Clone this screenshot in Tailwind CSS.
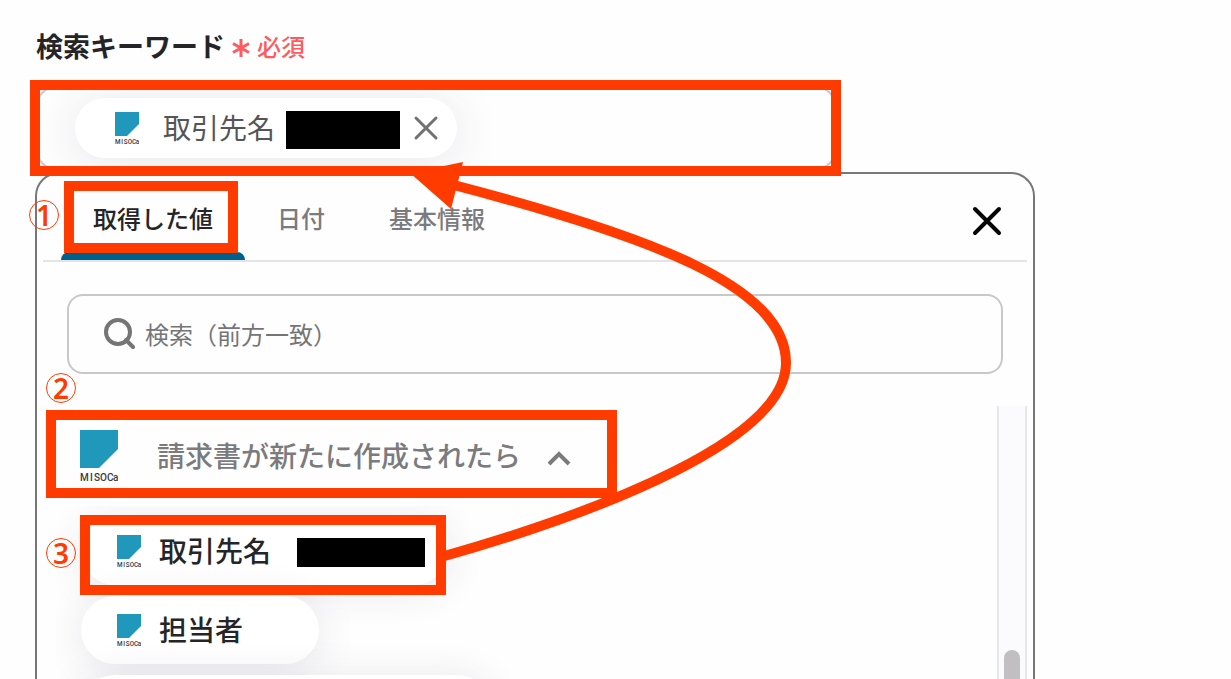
<!DOCTYPE html>
<html lang="ja">
<head>
<meta charset="utf-8">
<title>検索キーワード</title>
<script src="https://cdn.jsdelivr.net/npm/@tailwindcss/browser@4"></script>
</head>
<body class="relative flex h-screen flex-col overflow-hidden bg-[#fefefe] pl-9 font-['Noto_Sans_CJK_JP',sans-serif] text-[#252528]">
<svg class="hidden">
  <symbol id="misoca" viewBox="0 0 38 52">
    <path d="M0 0H38V19L19 38H0Z" fill="#1f98bb"/>
    <g font-family="Roboto, sans-serif" font-size="10" font-weight="500" fill="#3a3a3d">
      <text y="51" x="0 10 14 20 27 33">MISOCa</text>
    </g>
  </symbol>
</svg>

<label for="keyword" class="mt-[26px] flex h-10 shrink-0 items-center text-[27px] leading-10 font-bold">検索キーワード<span class="ml-1 flex items-center gap-1 text-2xl font-medium text-[#ff5a5f]"><svg class="mx-[3px] mt-1 size-[18px]" viewBox="0 0 18 18" stroke="#ff5a5f" stroke-width="3" aria-hidden="true"><path d="M9 0V18M1 4.500L17 13.500M17 4.500L1 13.500"/></svg><span>必須</span></span></label>

<div class="relative z-10 mt-5 mr-[395px] h-[84px] shrink-0">
  <div class="flex h-full items-center overflow-hidden rounded-[20px] border-2 border-[#c8c8cb] pl-[37px]">
    <div class="flex h-[60px] items-center rounded-full bg-white pr-[18px] pl-10 text-[28px] text-[#555558] shadow-[0_4px_48px_rgba(60,50,90,0.12)]">
      <svg class="h-[33px] w-6" aria-hidden="true"><use href="#misoca"/></svg>
      <span class="ml-6 pb-[2px] leading-10">取引先名</span>
      <span class="mt-1 ml-[11px] h-[38px] w-[114px] bg-black"></span>
      <button type="button" aria-label="削除" class="ml-[13px]">
        <svg class="size-[26px]" viewBox="0 0 26 26" fill="none" stroke="#717174" stroke-width="3" stroke-linecap="round"><path d="M3 3L23 23M23 3L3 23"/></svg>
      </button>
    </div>
    <input id="keyword" type="text" class="h-full min-w-0 flex-1 bg-transparent px-4 text-2xl outline-none">
  </div>
  <div class="pointer-events-none absolute -top-[6px] -right-[5px] -bottom-[6px] -left-[6px] border-10 border-[#ff3b00]"></div>
</div>

<section class="mt-[2px] mr-[196px] -ml-px flex min-h-0 flex-1 flex-col rounded-t-3xl border-2 border-b-0 border-[#77777a] px-[6px]">
  <div class="flex h-[88px] shrink-0 items-center justify-between border-b-2 border-[#e4e4e6] pr-6 pl-[18px]">
    <div role="tablist" class="flex h-full text-2xl font-medium text-[#7b7b7e]">
      <div class="relative">
        <button type="button" role="tab" aria-selected="true" class="h-full px-8 pt-[2px] text-[#252528]">取得した値</button>
        <div class="absolute inset-x-0 bottom-0 h-2 rounded-t-lg bg-[#00608a]"></div>
        <div class="pointer-events-none absolute top-[7px] right-[7px] bottom-[7px] left-[3px] border-10 border-[#ff3b00]"></div>
        <span class="absolute top-[26px] -left-8 flex size-[30px] items-center justify-center rounded-full border border-[#ff3b00] font-['Noto_Sans',sans-serif] text-[28px] leading-none font-semibold text-[#ff3b00]">1</span>
      </div>
      <button type="button" role="tab" class="px-8 pt-[2px]">日付</button>
      <button type="button" role="tab" class="px-8 pt-[2px]">基本情報</button>
    </div>
    <button type="button" aria-label="閉じる" class="pt-2">
      <svg class="size-8" viewBox="0 0 32 32" fill="none" stroke="#050506" stroke-width="4" stroke-linecap="round"><path d="M4 4L28 28M28 4L4 28"/></svg>
    </button>
  </div>

  <label class="mx-6 mt-8 flex h-20 shrink-0 items-center gap-[10px] rounded-2xl border-2 border-[#c8c8cb] px-[34px]">
    <svg class="size-8 shrink-0" viewBox="0 0 32 32" fill="none" stroke="#757578" stroke-width="4" aria-hidden="true"><circle cx="15" cy="14" r="12"/><path d="M23 22L30 29" stroke-linecap="round"/></svg>
    <input type="text" aria-label="検索" placeholder="検索（前方一致）" class="min-w-0 flex-1 bg-transparent text-2xl outline-none placeholder:text-[#757578]">
  </label>

  <div class="mt-8 flex min-h-0 flex-1">
    <div class="flex min-w-0 flex-1 flex-col pl-[13px]">
      <div class="relative w-fit shrink-0">
        <button type="button" aria-expanded="true" class="flex h-[100px] items-center pr-9 pl-6 text-[28px] leading-10 font-medium text-[#7b7b7e]">
          <svg class="h-[52px] w-[38px]" aria-hidden="true"><use href="#misoca"/></svg>
          <span class="ml-[39px] pb-[2px]">請求書が新たに作成されたら</span>
          <svg class="mt-1 ml-[26px] size-6" viewBox="0 0 24 24" fill="none" stroke="#7b7b7e" stroke-width="4" aria-hidden="true"><path d="M2 18L12 8L22 18"/></svg>
        </button>
        <div class="pointer-events-none absolute -inset-x-[10px] top-1 bottom-2 border-10 border-[#ff3b00]"></div>
        <span class="absolute -top-[33px] -left-[10px] flex size-[30px] items-center justify-center rounded-full border border-[#ff3b00] font-['Noto_Sans',sans-serif] text-[28px] leading-none font-semibold text-[#ff3b00]">2</span>
      </div>
      <div class="relative min-h-0 flex-1">
        <ul class="flex h-full flex-col items-start gap-[11px] overflow-hidden pt-[11px] pl-[25px] text-[28px] leading-10 font-medium">
          <li class="shrink-0">
            <button type="button" class="flex h-[68px] items-center rounded-full bg-white pr-[23px] pl-9 shadow-[0_4px_40px_rgba(60,50,90,0.12)]">
              <svg class="h-[33px] w-6" aria-hidden="true"><use href="#misoca"/></svg>
              <span class="ml-[18px] pb-[2px]">取引先名</span>
              <span class="mt-[2px] ml-[26px] h-[29px] w-32 bg-black"></span>
            </button>
          </li>
          <li class="shrink-0">
            <button type="button" class="flex h-[68px] items-center rounded-full bg-white pr-[76px] pl-9 shadow-[0_4px_40px_rgba(60,50,90,0.12)]">
              <svg class="h-[33px] w-6" aria-hidden="true"><use href="#misoca"/></svg>
              <span class="ml-[18px] pb-[2px]">担当者</span>
            </button>
          </li>
          <li class="h-[68px] w-[410px] shrink-0 rounded-full bg-white shadow-[0_4px_40px_rgba(60,50,90,0.12)]"></li>
        </ul>
        <div class="pointer-events-none absolute top-[9px] left-6 h-20 w-[366px] border-10 border-[#ff3b00]"></div>
        <span class="absolute top-8 -left-[10px] flex size-[30px] items-center justify-center rounded-full border border-[#ff3b00] font-['Noto_Sans',sans-serif] text-[28px] leading-none font-semibold text-[#ff3b00]">3</span>
      </div>
    </div>
    <div class="flex w-[30px] flex-col items-center overflow-hidden border-x-2 border-[#e8e8ea] bg-[#fbfafd]">
      <div class="mt-[244px] h-40 w-4 shrink-0 rounded-full bg-[#c1bfc2]"></div>
    </div>
  </div>
</section>

<svg class="pointer-events-none absolute top-0 left-0 z-20 h-[679px] w-[1231px]" viewBox="0 0 1231 679" aria-hidden="true">
  <path d="M441 557C600 512 786 440 786 363C786 286 650 236 450 184" fill="none" stroke="#ff3b00" stroke-width="10" stroke-linecap="round"/>
  <path d="M410 173L463 162L451 209Z" fill="#ff3b00"/>
</svg>
</body>
</html>
